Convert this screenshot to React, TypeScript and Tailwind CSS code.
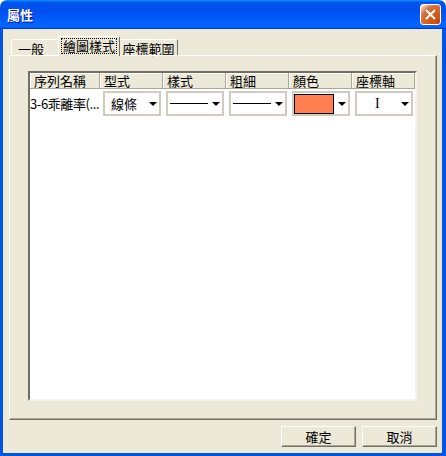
const cjk = "font-['Noto_Sans_CJK_TC','Noto_Sans_CJK_JP',sans-serif]";

function Arrow() {
  return (
    <svg width="8" height="4" viewBox="0 0 8 4" className="shrink-0">
      <path d="M0 0H8L4 4Z" fill="#000" />
    </svg>
  );
}

function Combo({ children, className }: { children?: React.ReactNode; className?: string }) {
  return (
    <div
      className={
        "ml-[3px] mt-[2px] flex h-[25px] w-[58px] items-center justify-between border-2 border-[#cfccbf] bg-white pr-[2px] " +
        (className ?? "")
      }
    >
      {children}
      <Arrow />
    </div>
  );
}

const columns = [
  { label: "序列名稱", w: "w-[70px]" },
  { label: "型式", w: "w-[63px]" },
  { label: "樣式", w: "w-[63px]" },
  { label: "粗細", w: "w-[63px]" },
  { label: "顏色", w: "w-[63px]" },
  { label: "座標軸", w: "w-[63px]" },
];

export default function App() {
  return (
    <div className={"flex h-[456px] w-[446px] flex-col bg-white text-[13px] text-black " + cjk}>
      {/* title bar */}
      <div className="flex h-[29px] shrink-0 items-center justify-between rounded-t-[7px] bg-[linear-gradient(180deg,#0997ff_0%,#0053ee_8%,#0050ee_40%,#0066ff_88%,#0066ff_93%,#005bff_95%,#003dd7_96%,#003dd7_100%)] pl-[7px] pr-[5px]">
        <span className="text-[13px] font-bold text-white [text-shadow:1px_1px_#0f1089]">屬性</span>
        <button className="flex h-[21px] w-[21px] items-center justify-center rounded-[3px] border border-white bg-[radial-gradient(circle_at_90%_90%,#cc4600_0%,#dc6527_55%,#cd7546_70%,#ffccb2_90%,#fff_100%)]">
          <svg width="11" height="11" viewBox="0 0 11 11">
            <path d="M1 1L10 10M10 1L1 10" stroke="#fff" strokeWidth="2" />
          </svg>
        </button>
      </div>

      {/* body */}
      <div className="flex flex-1 flex-col border-b-[3px] border-l-[3px] border-r-[4px] border-[#0055e5] bg-[#ece9d8]">
        {/* tabs */}
        <div className="mt-[7px] flex h-[19px] items-end pl-[8px]">
          <div className="flex h-[16px] w-[49px] items-center rounded-tl-[2px] border-l border-t border-white pl-[6px] pt-[1px] leading-none">
            一般
          </div>
          <div className="relative z-10 -mb-px -ml-[2px] flex h-[20px] w-[62px] items-center justify-center rounded-t-[2px] border-l border-r border-t border-l-white border-r-[#716f64] border-t-white bg-[#ece9d8] pb-[1px]">
            <span className="border border-dotted border-black px-[1px] leading-[14px]">繪圖樣式</span>
          </div>
          <div className="flex h-[16px] w-[58px] items-center justify-center rounded-tr-[2px] border-r border-t border-r-[#716f64] border-t-white pt-[1px] leading-none">
            座標範圍
          </div>
        </div>

        {/* panel */}
        <div className="ml-[6px] mr-[5px] h-[365px] border-b border-l border-r border-t border-b-[#716f64] border-l-white border-r-[#716f64] border-t-white pl-[18px] pt-[15px] shadow-[inset_-1px_-1px_0_#aca899]">
          <div className="h-[330px] w-[389px] border-2 border-b-[#f4f3ee] border-l-[#716f64] border-r-[#f4f3ee] border-t-[#716f64] bg-white">
            <div className="flex h-[16px]">
              {columns.map((c) => (
                <div
                  key={c.label}
                  className={
                    c.w +
                    " flex items-center border-b border-r border-[#aca899] bg-[#ece9d8] pl-[4px] leading-none shadow-[inset_1px_1px_0_#fff]"
                  }
                >
                  {c.label}
                </div>
              ))}
            </div>
            <div className="flex h-[30px]">
              <div className="flex w-[70px] items-center overflow-hidden whitespace-nowrap tracking-[-0.4px]">
                3-6乖離率(...
              </div>
              <div className="w-[63px]">
                <Combo className="pl-[6px]">
                  <span className="leading-none">線條</span>
                </Combo>
              </div>
              <div className="w-[63px]">
                <Combo className="pl-[2px]">
                  <span className="h-px w-[38px] bg-black" />
                </Combo>
              </div>
              <div className="w-[63px]">
                <Combo className="pl-[2px]">
                  <span className="h-px w-[38px] bg-black" />
                </Combo>
              </div>
              <div className="w-[63px]">
                <Combo className="pl-0 pr-[1px]">
                  <span className="h-[20px] w-[40px] border border-black bg-[#ff7f50]" />
                </Combo>
              </div>
              <div className="w-[63px]">
                <Combo className="pl-[18px]">
                  <span className="font-['Liberation_Serif',serif] text-[14px] leading-none">I</span>
                </Combo>
              </div>
            </div>
          </div>
        </div>

        {/* buttons */}
        <div className="mr-[5px] mt-[6px] flex justify-end gap-[6px]">
          <button className="flex h-[21px] w-[75px] items-center justify-center border border-b-[#716f64] border-l-white border-r-[#716f64] border-t-white bg-[#ece9d8] leading-none shadow-[inset_-1px_-1px_0_#aca899]">
            確定
          </button>
          <button className="flex h-[21px] w-[75px] items-center justify-center border border-b-[#716f64] border-l-white border-r-[#716f64] border-t-white bg-[#ece9d8] leading-none shadow-[inset_-1px_-1px_0_#aca899]">
            取消
          </button>
        </div>
      </div>
    </div>
  );
}
